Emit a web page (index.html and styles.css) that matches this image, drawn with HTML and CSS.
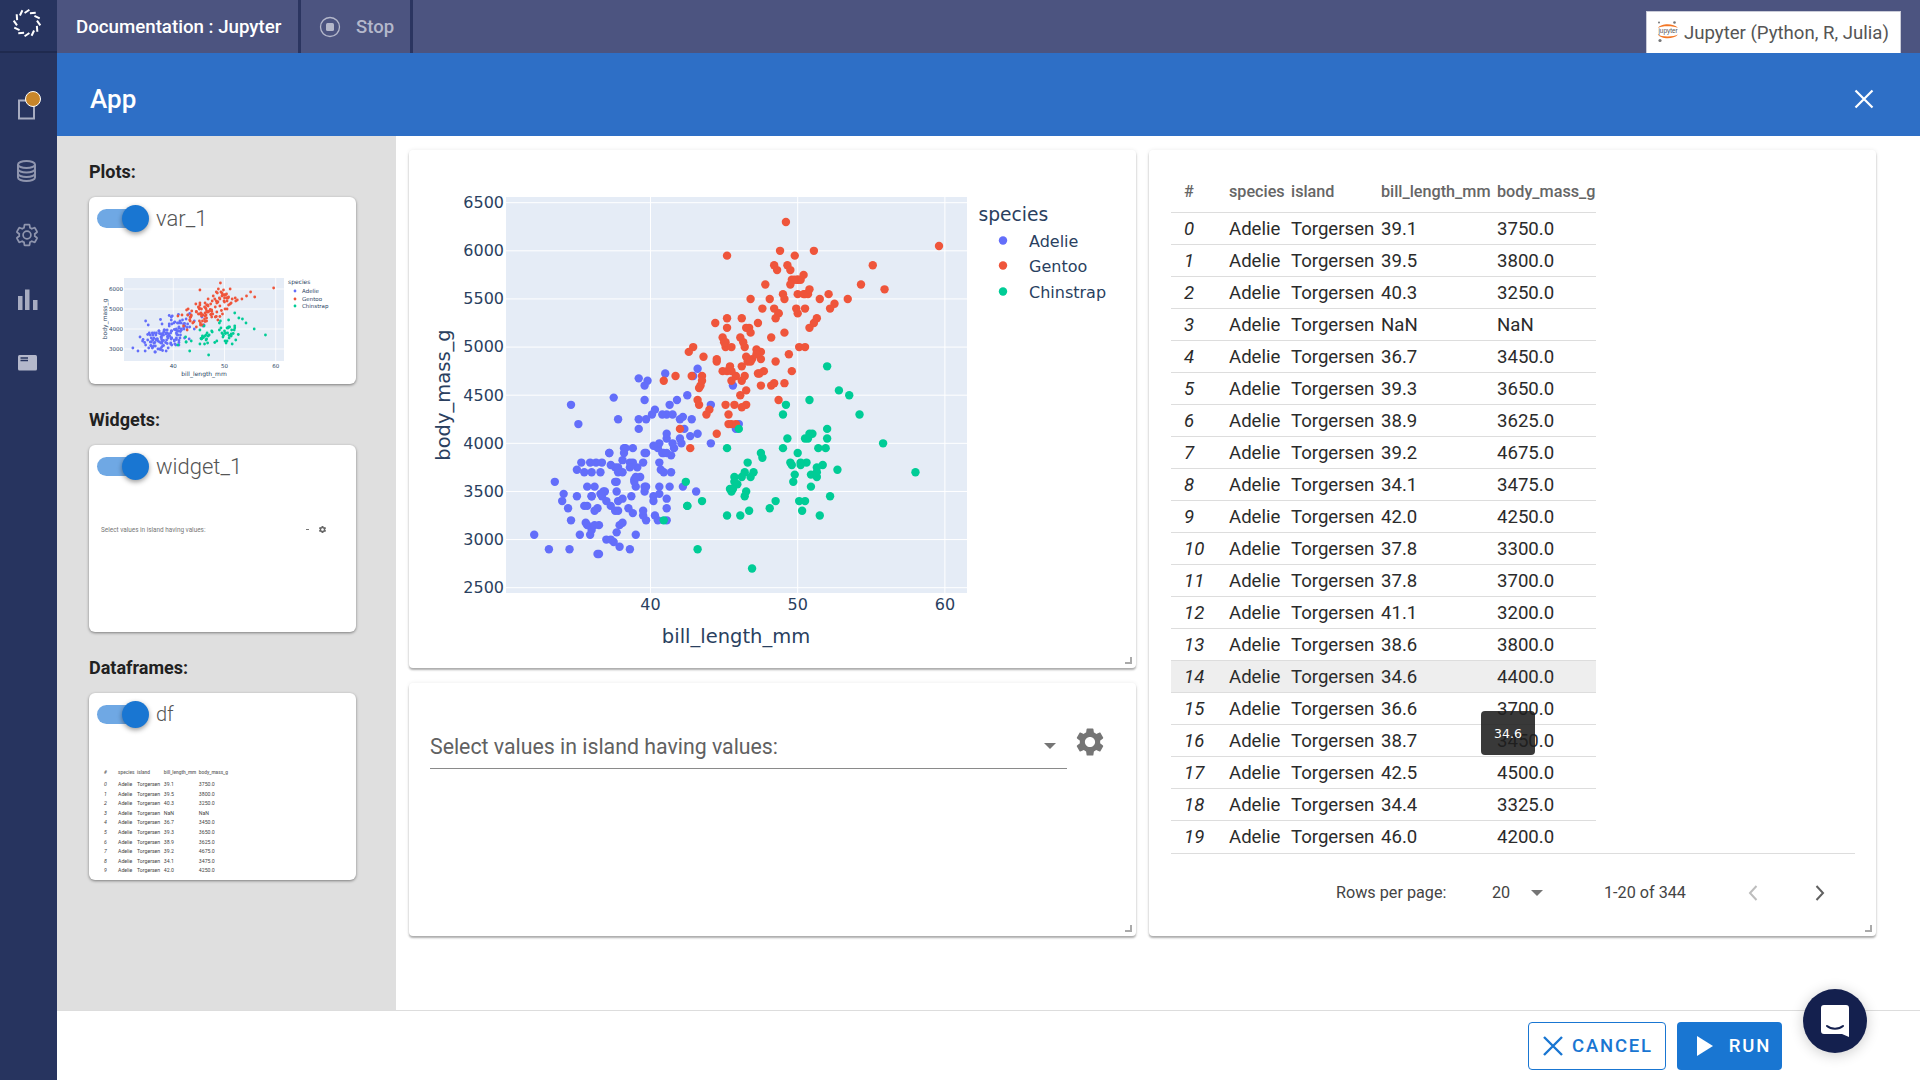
FILE: index.html
```html
<!DOCTYPE html>
<html lang="en">
<head>
  <meta charset="UTF-8">
  <title>Documentation : Jupyter</title>
  <link rel="stylesheet" href="styles.css">
</head>
<body>
  <div class="app">
    <nav class="rail">
      <div class="rail-logo">
        <svg width="32" height="32" viewBox="-16 -16 32 32">
          <g stroke="#fff" stroke-width="2">
            <line x1="-2.400" y1="-10" x2="2.400" y2="-13.300"/>
            <line x1="-2.400" y1="-10" x2="2.400" y2="-13.300" transform="rotate(30)"/>
            <line x1="-2.400" y1="-10" x2="2.400" y2="-13.300" transform="rotate(60)"/>
            <line x1="-2.400" y1="-10" x2="2.400" y2="-13.300" transform="rotate(90)"/>
            <line x1="-2.400" y1="-10" x2="2.400" y2="-13.300" transform="rotate(120)"/>
            <line x1="-2.400" y1="-10" x2="2.400" y2="-13.300" transform="rotate(150)"/>
            <line x1="-2.400" y1="-10" x2="2.400" y2="-13.300" transform="rotate(180)"/>
            <line x1="-2.400" y1="-10" x2="2.400" y2="-13.300" transform="rotate(210)"/>
            <line x1="-2.400" y1="-10" x2="2.400" y2="-13.300" transform="rotate(240)"/>
            <line x1="-2.400" y1="-10" x2="2.400" y2="-13.300" transform="rotate(270)"/>
            <line x1="-2.400" y1="-10" x2="2.400" y2="-13.300" transform="rotate(300)"/>
            <line x1="-2.400" y1="-10" x2="2.400" y2="-13.300" transform="rotate(330)"/>
          </g>
        </svg>
      </div>
      <div class="rail-items">
        <div class="rail-item">
          <svg width="32" height="32" viewBox="0 0 32 32">
            <rect x="8" y="9.500" width="15" height="18" fill="none" stroke="#a7acc1" stroke-width="2"/>
          </svg>
          <span class="rail-badge"></span>
        </div>
        <div class="rail-item">
          <svg width="32" height="32" viewBox="0 0 32 32" fill="none" stroke="#8f95ae" stroke-width="2">
            <ellipse cx="15.500" cy="9.500" rx="8.500" ry="3.500"/>
            <path d="M7 9.500v13c0 2 3.800 3.500 8.500 3.500s8.500-1.500 8.500-3.500v-13"/>
            <path d="M7 14c0 2 3.800 3.500 8.500 3.500S24 16 24 14M7 18.500c0 2 3.800 3.500 8.500 3.500s8.500-1.500 8.500-3.500"/>
          </svg>
        </div>
        <div class="rail-item">
          <svg width="26" height="26" viewBox="0 0 24 24" fill="none" stroke="#8f95ae" stroke-width="1.600">
            <path d="M19.140 12.940c.04-.3.06-.61.06-.94 0-.32-.02-.64-.07-.94l2.030-1.580c.18-.14.23-.41.12-.61l-1.920-3.320c-.12-.22-.37-.29-.59-.22l-2.390.96c-.5-.38-1.030-.7-1.620-.94l-.36-2.540c-.04-.24-.24-.41-.48-.41h-3.840c-.24 0-.43.17-.47.41l-.36 2.540c-.59.24-1.130.57-1.620.94l-2.390-.96c-.22-.08-.47 0-.59.22L2.740 8.870c-.12.21-.08.47.12.61l2.030 1.580c-.05.3-.09.63-.09.94s.02.64.07.94l-2.030 1.580c-.18.14-.23.41-.12.61l1.920 3.320c.12.22.37.29.59.22l2.390-.96c.5.38 1.030.7 1.620.94l.36 2.540c.05.24.24.41.48.41h3.840c.24 0 .44-.17.47-.41l.36-2.540c.59-.24 1.130-.56 1.620-.94l2.390.96c.22.08.47 0 .59-.22l1.920-3.320c.12-.22.07-.47-.12-.61l-2.010-1.580zM12 15.600c-1.980 0-3.600-1.620-3.600-3.600s1.620-3.600 3.600-3.600 3.600 1.620 3.600 3.600-1.620 3.600-3.600 3.600z"/>
          </svg>
        </div>
        <div class="rail-item">
          <svg width="32" height="32" viewBox="0 0 32 32" fill="#a7acc1">
            <rect x="7" y="13" width="4.500" height="14"/>
            <rect x="14" y="6.500" width="4.500" height="20.500"/>
            <rect x="22" y="17" width="4.500" height="10"/>
          </svg>
        </div>
        <div class="rail-item">
          <svg width="32" height="32" viewBox="0 0 32 32">
            <rect x="7" y="8" width="19" height="15.500" rx="1.500" fill="#b4b8cb"/>
            <path d="M9.500 11h7.500M9.500 13.500h7.500" stroke="#27345f" stroke-width="1.300"/>
          </svg>
        </div>
      </div>
    </nav>

    <div class="main">
      <header class="topbar">
        <div class="tab tab-title">Documentation : Jupyter</div>
        <div class="tab tab-stop">
          <svg width="22" height="22" viewBox="0 0 22 22">
            <circle cx="11" cy="11" r="9.500" fill="none" stroke="#b4b8cb" stroke-width="1.300"/>
            <rect x="7" y="7" width="8" height="8" rx="1.500" fill="#b4b8cb"/>
          </svg>
          <span>Stop</span>
        </div>
        <div class="env-select">
          <svg width="22" height="24" viewBox="0 0 22 24">
            <circle cx="17.500" cy="1.500" r="1.300" fill="#767677"/>
            <circle cx="2" cy="1.500" r="1" fill="#767677"/>
            <circle cx="3" cy="19.500" r="1.600" fill="#767677"/>
            <path d="M1 7C4 2 17 2 21 7C17 4.500 4 4.500 1 7z" fill="#f37726"/>
            <path d="M1 13.500C4 18.500 17 18.500 21 13.500C17 16 4 16 1 13.500z" fill="#f37726"/>
            <text x="11" y="11.800" class="env-logo-text" text-anchor="middle">jupyter</text>
          </svg>
          <span>Jupyter (Python, R, Julia)</span>
        </div>
      </header>

      <div class="title-bar">
        <h1>App</h1>
        <svg class="close-icon" width="20" height="20" viewBox="0 0 20 20">
          <path d="M1.500 1.500l17 17M18.500 1.500l-17 17" stroke="#fff" stroke-width="2.200" fill="none"/>
        </svg>
      </div>

      <div class="body">
        <aside class="outputs">
          <h3>Plots:</h3>
          <div class="thumb">
            <div class="thumb-head">
              <span class="toggle"></span>
              <span class="thumb-name">var_1</span>
            </div>
            <svg id="plotThumb" class="thumb-plot" width="267" height="135"></svg>
          </div>

          <h3>Widgets:</h3>
          <div class="thumb">
            <div class="thumb-head">
              <span class="toggle"></span>
              <span class="thumb-name">widget_1</span>
            </div>
            <div class="thumb-widget">
              <span>Select values in island having values:</span>
              <i class="thumb-dash"></i>
              <svg width="9" height="9" viewBox="0 0 24 24" fill="#666">
                <path d="M19.140 12.940c.04-.3.06-.61.06-.94 0-.32-.02-.64-.07-.94l2.030-1.580c.18-.14.23-.41.12-.61l-1.920-3.320c-.12-.22-.37-.29-.59-.22l-2.390.96c-.5-.38-1.030-.7-1.620-.94l-.36-2.540c-.04-.24-.24-.41-.48-.41h-3.840c-.24 0-.43.17-.47.41l-.36 2.540c-.59.24-1.130.57-1.620.94l-2.390-.96c-.22-.08-.47 0-.59.22L2.740 8.870c-.12.21-.08.47.12.61l2.030 1.580c-.05.3-.09.63-.09.94s.02.64.07.94l-2.030 1.580c-.18.14-.23.41-.12.61l1.920 3.320c.12.22.37.29.59.22l2.390-.96c.5.38 1.030.7 1.620.94l.36 2.540c.05.24.24.41.48.41h3.840c.24 0 .44-.17.47-.41l.36-2.540c.59-.24 1.130-.56 1.620-.94l2.390.96c.22.08.47 0 .59-.22l1.920-3.320c.12-.22.07-.47-.12-.61l-2.010-1.580zM12 15.600c-1.980 0-3.600-1.620-3.600-3.600s1.620-3.600 3.600-3.600 3.600 1.620 3.600 3.600-1.620 3.600-3.600 3.600z"/>
              </svg>
            </div>
          </div>

          <h3>Dataframes:</h3>
          <div class="thumb">
            <div class="thumb-head">
              <span class="toggle"></span>
              <span class="thumb-name thumb-name-small">df</span>
            </div>
            <div id="tableThumb" class="thumb-table"></div>
          </div>
        </aside>

        <section class="canvas">
          <div class="stack">
            <div class="card plot-card">
              <svg id="mainPlot" width="727" height="518"></svg>
              <i class="resize"></i>
            </div>
            <div class="card widget-card">
              <div class="select-row">
                <div class="select-box">
                  <span>Select values in island having values:</span>
                  <i class="caret"></i>
                </div>
                <svg class="select-gear" width="34" height="34" viewBox="0 0 24 24" fill="#757575">
                  <path d="M19.140 12.940c.04-.3.06-.61.06-.94 0-.32-.02-.64-.07-.94l2.030-1.580c.18-.14.23-.41.12-.61l-1.920-3.320c-.12-.22-.37-.29-.59-.22l-2.390.96c-.5-.38-1.030-.7-1.620-.94l-.36-2.540c-.04-.24-.24-.41-.48-.41h-3.840c-.24 0-.43.17-.47.41l-.36 2.540c-.59.24-1.130.57-1.620.94l-2.390-.96c-.22-.08-.47 0-.59.22L2.740 8.870c-.12.21-.08.47.12.61l2.030 1.580c-.05.3-.09.63-.09.94s.02.64.07.94l-2.030 1.580c-.18.14-.23.41-.12.61l1.920 3.320c.12.22.37.29.59.22l2.390-.96c.5.38 1.030.7 1.620.94l.36 2.540c.05.24.24.41.48.41h3.840c.24 0 .44-.17.47-.41l.36-2.540c.59-.24 1.130-.56 1.620-.94l2.390.96c.22.08.47 0 .59-.22l1.920-3.320c.12-.22.07-.47-.12-.61l-2.010-1.580zM12 15.600c-1.980 0-3.600-1.620-3.600-3.600s1.620-3.600 3.600-3.600 3.600 1.620 3.600 3.600-1.620 3.600-3.600 3.600z"/>
                </svg>
              </div>
              <i class="resize"></i>
            </div>
          </div>

          <div class="card table-card">
            <table class="data-table">
              <thead>
                <tr><th>#</th><th>species</th><th>island</th><th>bill_length_mm</th><th>body_mass_g</th></tr>
              </thead>
              <tbody id="rows"></tbody>
            </table>
            <div class="pagination">
              <span class="rows-label">Rows per page:</span>
              <span class="rows-value">20</span>
              <i class="caret caret-small"></i>
              <span class="range">1-20 of 344</span>
              <svg class="page-prev" width="12" height="18" viewBox="0 0 12 18">
                <path d="M9.500 2L3 9l6.500 7" fill="none" stroke="#bdbdbd" stroke-width="2"/>
              </svg>
              <svg class="page-next" width="12" height="18" viewBox="0 0 12 18">
                <path d="M2.500 2L9 9l-6.500 7" fill="none" stroke="#616161" stroke-width="2"/>
              </svg>
            </div>
            <div class="tooltip">34.6</div>
            <i class="resize"></i>
          </div>
        </section>
      </div>

      <footer class="actions">
        <button class="btn btn-cancel">
          <svg width="22" height="22" viewBox="0 0 22 22">
            <path d="M2 2l18 18M20 2L2 20" stroke="#1976d2" stroke-width="2.400" fill="none"/>
          </svg>
          CANCEL
        </button>
        <button class="btn btn-run">
          <svg width="16" height="20" viewBox="0 0 16 20"><path d="M0 0l16 10L0 20z" fill="#fff"/></svg>
          RUN
        </button>
      </footer>
    </div>

    <div class="chat">
      <svg width="30" height="34" viewBox="0 0 30 34">
        <path d="M4 1h22a3 3 0 0 1 3 3v29l-7-3H4a3 3 0 0 1-3-3V4a3 3 0 0 1 3-3z" fill="#fff"/>
        <path d="M7 22c4 3.500 12 3.500 16 0" fill="none" stroke="#14204e" stroke-width="2" stroke-linecap="round"/>
      </svg>
    </div>
  </div>

  <script src="app.js"></script>
</body>
</html>
```

FILE: styles.css
```css
* {
  box-sizing: border-box;
}

body {
  margin: 0;
  height: 100vh;
  overflow: hidden;
  font-family: Roboto, "Liberation Sans", sans-serif;
  color: #212121;
  background: #fff;
}

.app {
  display: flex;
  height: 100%;
}

/* left rail */
.rail {
  width: 57px;
  flex: none;
  background: #27345f;
}

.rail-logo {
  height: 53px;
  display: flex;
  align-items: center;
  justify-content: center;
  border-bottom: 2px solid #1f2a4f;
  padding: 0 3px 6px 0;
}

.rail-items {
  padding-top: 22px;
}

.rail-item {
  position: relative;
  height: 64px;
  display: flex;
  align-items: center;
  justify-content: center;
  padding-right: 3px;
}

.rail-badge {
  position: absolute;
  left: 25px;
  top: 16px;
  width: 16px;
  height: 16px;
  border-radius: 50%;
  background: #c8862a;
  border: 1px solid #fff;
}

.main {
  flex: 1;
  min-width: 0;
  display: flex;
  flex-direction: column;
}

/* top bar */
.topbar {
  height: 53px;
  flex: none;
  display: flex;
  background: #4c5480;
}

.tab {
  display: flex;
  align-items: center;
  border-right: 3px solid #2b3560;
  font-size: 18.700px;
  font-weight: 500;
}

.tab-title {
  width: 244px;
  padding-left: 19px;
  color: #fff;
}

.tab-stop {
  width: 112px;
  padding-left: 18px;
  gap: 15px;
  font-size: 18.500px;
  color: #b4b8cb;
}

.env-select {
  margin: 11px 19px 0 auto;
  width: 255px;
  display: flex;
  align-items: center;
  gap: 5px;
  padding-left: 10px;
  background: #fff;
  border: 1px solid #c9cbd8;
  border-bottom: none;
  font-size: 18.600px;
  white-space: nowrap;
  color: #555;
}

.env-logo-text {
  font-family: "Liberation Sans", sans-serif;
  font-size: 6.400px;
  fill: #555;
}

/* blue title */
.title-bar {
  height: 83px;
  flex: none;
  display: flex;
  align-items: center;
  justify-content: space-between;
  padding: 9px 46px 0 33px;
  background: #2e6fc6;
}

.title-bar h1 {
  margin: 0;
  font-size: 26px;
  font-weight: 500;
  color: #fff;
}

.close-icon {
  display: block;
}

.body {
  flex: 1;
  min-height: 0;
  display: flex;
}

/* output list */
.outputs {
  width: 339px;
  flex: none;
  padding: 23px 40px 0 32px;
  background: #dfdfdf;
}

.outputs h3 {
  margin: 0 0 13px;
  height: 25px;
  line-height: 25px;
  font-size: 18px;
  font-weight: 700;
  color: #212121;
}

.thumb {
  height: 187px;
  margin-bottom: 23px;
  overflow: hidden;
  background: #fff;
  border-radius: 6px;
  box-shadow: 0 1px 3px rgba(0, 0, 0, 0.45);
}

.thumb-head {
  height: 52px;
  display: flex;
  align-items: center;
  padding: 0 0 10px 8px;
}

.toggle {
  position: relative;
  width: 38px;
  height: 19px;
  border-radius: 10px;
  background: #6fa8e4;
}

.toggle::after {
  content: "";
  position: absolute;
  left: 25px;
  top: -4px;
  width: 27px;
  height: 27px;
  border-radius: 50%;
  background: #1976d2;
  box-shadow: 0 2px 5px rgba(0, 0, 0, 0.4);
}

.thumb-name {
  margin-left: 21px;
  font-size: 22px;
  font-weight: 300;
  color: #555;
}

.thumb-name-small {
  font-size: 20px;
}

.thumb-plot {
  display: block;
}

.thumb-widget {
  display: flex;
  align-items: center;
  padding: 28px 0 0 12px;
  font-size: 6.400px;
  color: #777;
}

.thumb-dash {
  width: 3px;
  height: 1px;
  margin-left: 101px;
  background: #777;
}

.thumb-widget svg {
  margin-left: 9px;
}

.thumb-table {
  padding: 23px 0 0 15px;
  font-size: 5.200px;
  line-height: 9.600px;
  color: #444;
}

.thumb-row {
  display: grid;
  grid-template-columns: 14px 19px 26.800px 35px 40px;
  white-space: nowrap;
}

.thumb-row-head {
  margin-bottom: 2.400px;
  font-size: 4.800px;
  font-weight: 500;
  color: #666;
}

.thumb-row span:first-child {
  font-style: italic;
}

/* cards */
.canvas {
  flex: 1;
  min-width: 0;
  display: flex;
  gap: 13px;
  padding: 14px 0 0 13px;
}

.stack {
  width: 727px;
  display: flex;
  flex-direction: column;
  gap: 15px;
}

.card {
  position: relative;
  background: #fff;
  border-radius: 4px;
  box-shadow: 0 2px 2px rgba(0, 0, 0, 0.3), 0 0 4px rgba(0, 0, 0, 0.08);
}

.plot-card {
  height: 518px;
}

.plot-card svg {
  display: block;
}

.widget-card {
  height: 253px;
}

.resize {
  position: absolute;
  right: 4px;
  bottom: 4px;
  width: 7px;
  height: 7px;
  border-right: 2px solid #aaa;
  border-bottom: 2px solid #aaa;
}

.select-row {
  display: flex;
  align-items: flex-start;
  padding: 42px 0 0 21px;
}

.select-box {
  width: 637px;
  height: 44px;
  display: flex;
  align-items: center;
  justify-content: space-between;
  padding: 0 11px 1px 0;
  border-bottom: 1px solid #8a8a8a;
  font-size: 21.300px;
  color: #616161;
}

.select-gear {
  margin-left: 6px;
}

.caret {
  width: 0;
  height: 0;
  border-left: 6px solid transparent;
  border-right: 6px solid transparent;
  border-top: 6px solid #757575;
}

.table-card {
  width: 727px;
  height: 786px;
  padding: 22px 21px 0 22px;
}

.data-table {
  width: 425px;
  table-layout: fixed;
  border-collapse: separate;
  border-spacing: 0;
}

.data-table th {
  height: 41px;
  padding: 0 0 2px;
  text-align: left;
  font-size: 16.200px;
  font-weight: 500;
  color: #666;
  border-bottom: 1px solid #ddd;
  white-space: nowrap;
}

.data-table th:nth-child(1) { width: 58px; padding-left: 13px; }
.data-table th:nth-child(2) { width: 62px; }
.data-table th:nth-child(3) { width: 90px; }
.data-table th:nth-child(4) { width: 116px; }

.data-table td {
  height: 32px;
  padding: 0;
  font-size: 18.600px;
  color: #2b2b2b;
  border-bottom: 1px solid #ddd;
  white-space: nowrap;
}

.data-table td:first-child {
  padding-left: 13px;
  font-style: italic;
}

.data-table tr:last-child td {
  border-bottom: none;
}

.data-table tr.hovered td {
  background: #eee;
}

.pagination {
  height: 78px;
  display: flex;
  align-items: center;
  border-top: 1px solid #ddd;
  font-size: 16.200px;
  color: #444;
}

.rows-label {
  margin-left: 165px;
  width: 156px;
}

.rows-value {
  width: 39px;
}

.caret-small {
  border-left-width: 6px;
  border-right-width: 6px;
}

.range {
  margin-left: 61px;
  width: 143px;
}

.page-next {
  margin-left: 55px;
}

.tooltip {
  position: absolute;
  left: 332px;
  top: 561px;
  width: 54px;
  height: 44px;
  display: flex;
  align-items: center;
  justify-content: center;
  border-radius: 4px;
  background: rgba(30, 30, 30, 0.88);
  color: #fff;
  font-family: "DejaVu Sans", sans-serif;
  font-size: 12.500px;
}

/* footer */
.actions {
  height: 70px;
  flex: none;
  display: flex;
  justify-content: flex-end;
  gap: 11px;
  padding: 11px 138px 0 0;
  border-top: 1px solid #ddd;
}

.btn {
  height: 48px;
  display: flex;
  align-items: center;
  justify-content: center;
  border-radius: 4px;
  font-family: inherit;
  font-size: 18.500px;
  font-weight: 500;
  letter-spacing: 1.800px;
}

.btn-cancel {
  width: 138px;
  gap: 8px;
  padding: 0 0 1px 1px;
  background: #fff;
  border: 1px solid #1976d2;
  color: #1976d2;
}

.btn-run {
  width: 105px;
  gap: 16px;
  padding: 0 0 1px 9px;
  background: #1976d2;
  border: none;
  color: #fff;
}

.chat {
  position: absolute;
  left: 1803px;
  top: 989px;
  width: 64px;
  height: 64px;
  display: flex;
  align-items: center;
  justify-content: center;
  border-radius: 50%;
  background: #14204e;
  box-shadow: 0 2px 14px rgba(0, 0, 0, 0.2);
}
```

FILE: app.js
```js
const adelie = [[39.1,3750],[39.5,3800],[40.3,3250],[36.7,3450],[39.3,3650],[38.9,3625],[39.2,4675],[34.1,3475],[42,4250],[37.8,3300],[37.8,3700],[41.1,3200],[38.6,3800],[34.6,4400],[36.6,3700],[38.7,3450],[42.5,4500],[34.4,3325],[46,4200],[37.8,3400],[37.7,3600],[35.9,3800],[38.2,3950],[38.8,3800],[35.3,3800],[40.6,3550],[40.5,3200],[37.9,3150],[40.5,3950],[39.5,3250],[37.2,3900],[39.5,3300],[40.9,3900],[36.4,3325],[39.2,4150],[38.8,3950],[42.2,3550],[37.6,3300],[39.8,4650],[36.5,3150],[40.8,3900],[36,3100],[44.1,4400],[37,3000],[39.6,4600],[41.1,3425],[37.5,2975],[36,3450],[42.3,4150],[39.6,3500],[40.1,4300],[35,3450],[42,4050],[34.5,2900],[41.4,3700],[39,3550],[40.6,3800],[36.5,2850],[37.6,3750],[35.7,3150],[41.3,4400],[37.6,3600],[41.1,4050],[36.4,2850],[41.6,3950],[35.5,3350],[41.1,4100],[35.9,3050],[41.8,4450],[33.5,3600],[39.7,3900],[39.6,3550],[45.8,4150],[35.5,3700],[42.8,4250],[40.9,3700],[37.2,3900],[36.2,3550],[42.1,4000],[34.6,3200],[42.9,4700],[36.7,3800],[35.1,4200],[37.3,3350],[41.3,3550],[36.3,3800],[36.9,3500],[38.3,3950],[38.9,3600],[35.7,3550],[41.1,4300],[34,3400],[39.6,4450],[36.2,3300],[40.8,4300],[38.1,3700],[40.3,4350],[33.1,2900],[43.2,4100],[35,3725],[41,4725],[37.7,3075],[37.8,4250],[37.9,2925],[39.7,3550],[38.6,3750],[38.2,3900],[38.1,3175],[43.2,4775],[38.1,3825],[45.6,4600],[39.7,3200],[42.2,4275],[39.6,3900],[42.7,4075],[38.6,2900],[37.3,3775],[35.7,3350],[41.1,3325],[36.2,3150],[37.7,3500],[40.2,3450],[41.4,3875],[35.2,3050],[40.6,4000],[38.8,3275],[41.5,4300],[39,3050],[44.1,4000],[38.5,3325],[43.1,3500],[36.8,3500],[37.5,4475],[38.1,3425],[41.1,3900],[35.6,3175],[40.2,3975],[37,3400],[39.7,4250],[40.2,3400],[40.6,3475],[32.1,3050],[40.7,3725],[37.3,3000],[39,3650],[39.2,4250],[36.6,3475],[36,3450],[37.8,3750],[36,3700],[41.5,4000]];

const gentoo = [[46.1,4500],[50,5700],[48.7,4450],[50,5700],[47.6,5400],[46.5,4550],[45.4,4800],[46.7,5200],[43.3,4400],[46.8,5150],[40.9,4650],[49,5550],[45.5,4650],[48.4,5850],[45.8,4200],[49.3,5850],[42,4150],[49.2,6300],[46.2,4800],[48.7,5350],[50.2,5700],[45.1,5000],[46.5,4400],[46.3,5050],[42.9,5000],[46.1,5100],[44.5,4100],[47.8,5650],[48.2,4600],[50,5550],[47.3,5250],[42.8,4700],[45.1,5050],[59.6,6050],[49.1,5150],[48.4,5400],[42.6,4950],[44.4,5250],[44,4350],[48.7,5350],[42.7,3950],[49.6,5700],[45.3,4300],[49.6,4750],[50.5,5550],[43.6,4900],[45.5,4200],[50.5,5400],[44.9,5100],[45.2,5300],[46.6,4850],[48.5,5300],[45.1,4400],[50.1,5000],[46.5,4900],[45,5050],[43.8,4300],[45.5,5000],[43.2,4450],[50.4,5550],[45.3,4200],[46.2,5300],[45.7,4400],[54.3,5650],[45.8,4700],[49.8,5700],[46.2,4650],[49.5,5800],[43.5,4700],[50.7,5550],[47.7,4750],[46.4,5000],[48.2,5100],[46.5,5200],[46.4,4700],[48.6,5800],[47.5,4600],[51.1,6000],[45.2,4750],[45.2,5950],[49.1,4625],[52.5,5450],[47.4,4725],[50,5350],[44.9,4750],[50.8,5600],[43.4,4600],[51.3,5300],[47.5,4875],[52.1,5550],[47.5,4950],[52.2,5400],[45.5,4750],[49.5,5650],[44.5,4850],[50.8,5200],[49.4,4925],[46.9,4875],[48.4,4625],[51.1,5250],[48.5,4850],[55.9,5600],[47.2,4975],[49.1,5500],[47.3,4725],[46.8,5500],[41.7,4700],[53.4,5500],[43.3,4575],[48.1,5500],[50.5,5000],[49.8,5950],[43.5,4650],[51.5,5500],[46.2,4375],[55.1,5850],[44.5,4875],[48.8,6000],[47.2,4925],[46.8,4850],[50.4,5750],[45.2,5200],[49.9,5400]];

const chinstrap = [[46.5,3500],[50,3900],[51.3,3650],[45.4,3525],[52.7,3725],[45.2,3950],[46.1,3250],[51.3,3750],[46,4150],[51.3,3700],[46.6,3800],[51.7,3775],[47,3700],[52,4050],[45.9,3575],[50.5,4050],[50.3,3300],[58,3700],[46.4,3450],[49.2,4400],[42.4,3600],[48.5,3400],[43.2,2900],[50.6,3800],[46.7,3300],[52,4150],[50.5,3400],[49.5,3800],[46.4,3700],[52.8,4550],[40.9,3200],[54.2,4300],[42.5,3350],[51,4100],[49.7,3600],[47.5,3900],[47.6,3850],[52,4800],[46.9,2700],[53.5,4500],[49,3950],[46.2,3650],[50.9,3550],[45.5,3500],[50.9,3675],[50.8,4450],[50.1,3400],[49,4300],[51.5,3250],[49.8,3675],[48.1,3325],[51.4,3950],[45.7,3600],[50.7,4050],[42.5,3350],[52.2,3450],[45.2,3250],[49.3,4050],[50.2,3800],[45.6,3525],[51.9,3950],[46.8,3650],[45.7,3650],[55.8,4000],[43.5,3400],[49.6,3775],[50.8,4100],[50.2,3775]];

const species = [
  { name: "Adelie", color: "#636efa", points: adelie },
  { name: "Gentoo", color: "#ef553b", points: gentoo },
  { name: "Chinstrap", color: "#00cc96", points: chinstrap },
];

const tableRows = [
  ["39.1","3750.0"],["39.5","3800.0"],["40.3","3250.0"],["NaN","NaN"],["36.7","3450.0"],
  ["39.3","3650.0"],["38.9","3625.0"],["39.2","4675.0"],["34.1","3475.0"],["42.0","4250.0"],
  ["37.8","3300.0"],["37.8","3700.0"],["41.1","3200.0"],["38.6","3800.0"],["34.6","4400.0"],
  ["36.6","3700.0"],["38.7","3450.0"],["42.5","4500.0"],["34.4","3325.0"],["46.0","4200.0"],
];

function drawPlot(svg, o) {
  const px = v => o.x40 + (v - 40) * o.xScale;
  const py = v => o.yRef + (o.yRefValue - v) * o.yScale;
  let out = `<rect x="${o.left}" y="${o.top}" width="${o.right - o.left}" height="${o.bottom - o.top}" fill="#e5ecf6"/>`;

  o.xTicks.forEach(t => {
    out += `<line x1="${px(t)}" x2="${px(t)}" y1="${o.top}" y2="${o.bottom}" stroke="#fff" stroke-width="${o.grid}"/>`;
    out += `<text x="${px(t)}" y="${o.xTickY}" text-anchor="middle" font-size="${o.tickSize}">${t}</text>`;
  });
  o.yTicks.forEach(t => {
    out += `<line x1="${o.left}" x2="${o.right}" y1="${py(t)}" y2="${py(t)}" stroke="#fff" stroke-width="${o.grid}"/>`;
    out += `<text x="${o.yTickX}" y="${py(t) + o.tickDy}" text-anchor="end" font-size="${o.tickSize}">${t}</text>`;
  });

  species.forEach((s, i) => {
    s.points.forEach(p => {
      out += `<circle cx="${px(p[0])}" cy="${py(p[1])}" r="${o.r}" fill="${s.color}"/>`;
    });
    out += `<circle cx="${o.legendDotX}" cy="${o.legendY[i]}" r="${o.r}" fill="${s.color}"/>`;
    out += `<text x="${o.legendTextX}" y="${o.legendY[i] + o.legendDy}" font-size="${o.legendSize}">${s.name}</text>`;
  });

  out += `<text x="${o.legendTitleX}" y="${o.legendTitleY}" font-size="${o.legendTitleSize}">species</text>`;
  out += `<text x="${o.xTitleX}" y="${o.xTitleY}" text-anchor="middle" font-size="${o.titleSize}">bill_length_mm</text>`;
  out += `<text transform="translate(${o.yTitleX} ${o.yTitleY}) rotate(-90)" text-anchor="middle" font-size="${o.titleSize}">body_mass_g</text>`;

  svg.setAttribute("font-family", "'DejaVu Sans', sans-serif");
  svg.setAttribute("fill", "#2a3f5f");
  svg.innerHTML = out;
}

drawPlot(document.getElementById("mainPlot"), {
  left: 97, right: 558, top: 47, bottom: 443,
  x40: 241.5, xScale: 14.72, yRef: 52.7, yRefValue: 6500, yScale: 0.09625,
  xTicks: [40, 50, 60], yTicks: [2500, 3000, 3500, 4000, 4500, 5000, 5500, 6000, 6500],
  xTickY: 460, yTickX: 95, tickSize: 16, tickDy: 5.4, grid: 1, r: 4.2,
  legendDotX: 594, legendTextX: 620, legendY: [90.5, 115.5, 141.5], legendSize: 16, legendDy: 6,
  legendTitleX: 569.5, legendTitleY: 71, legendTitleSize: 18.7, titleSize: 19.5,
  xTitleX: 327, xTitleY: 493, yTitleX: 41, yTitleY: 245,
});

drawPlot(document.getElementById("plotThumb"), {
  left: 35, right: 195, top: 29, bottom: 112,
  x40: 84.3, xScale: 5.12, yRef: 40, yRefValue: 6000, yScale: 0.02,
  xTicks: [40, 50, 60], yTicks: [3000, 4000, 5000, 6000],
  xTickY: 119, yTickX: 34, tickSize: 5.5, tickDy: 2, grid: 0.8, r: 1.4,
  legendDotX: 206, legendTextX: 213, legendY: [42, 50, 57], legendSize: 5.5, legendDy: 2,
  legendTitleX: 199, legendTitleY: 35, legendTitleSize: 6, titleSize: 6,
  xTitleX: 115, xTitleY: 127, yTitleX: 18, yTitleY: 70,
});

document.getElementById("rows").innerHTML = tableRows.map((r, i) => `
  <tr class="${i === 14 ? "hovered" : ""}">
    <td>${i}</td><td>Adelie</td><td>Torgersen</td><td>${r[0]}</td><td>${r[1]}</td>
  </tr>`).join("");

document.getElementById("tableThumb").innerHTML =
  `<div class="thumb-row thumb-row-head"><span>#</span><span>species</span><span>island</span><span>bill_length_mm</span><span>body_mass_g</span></div>` +
  tableRows.slice(0, 10).map((r, i) =>
    `<div class="thumb-row"><span>${i}</span><span>Adelie</span><span>Torgersen</span><span>${r[0]}</span><span>${r[1]}</span></div>`
  ).join("");
```
